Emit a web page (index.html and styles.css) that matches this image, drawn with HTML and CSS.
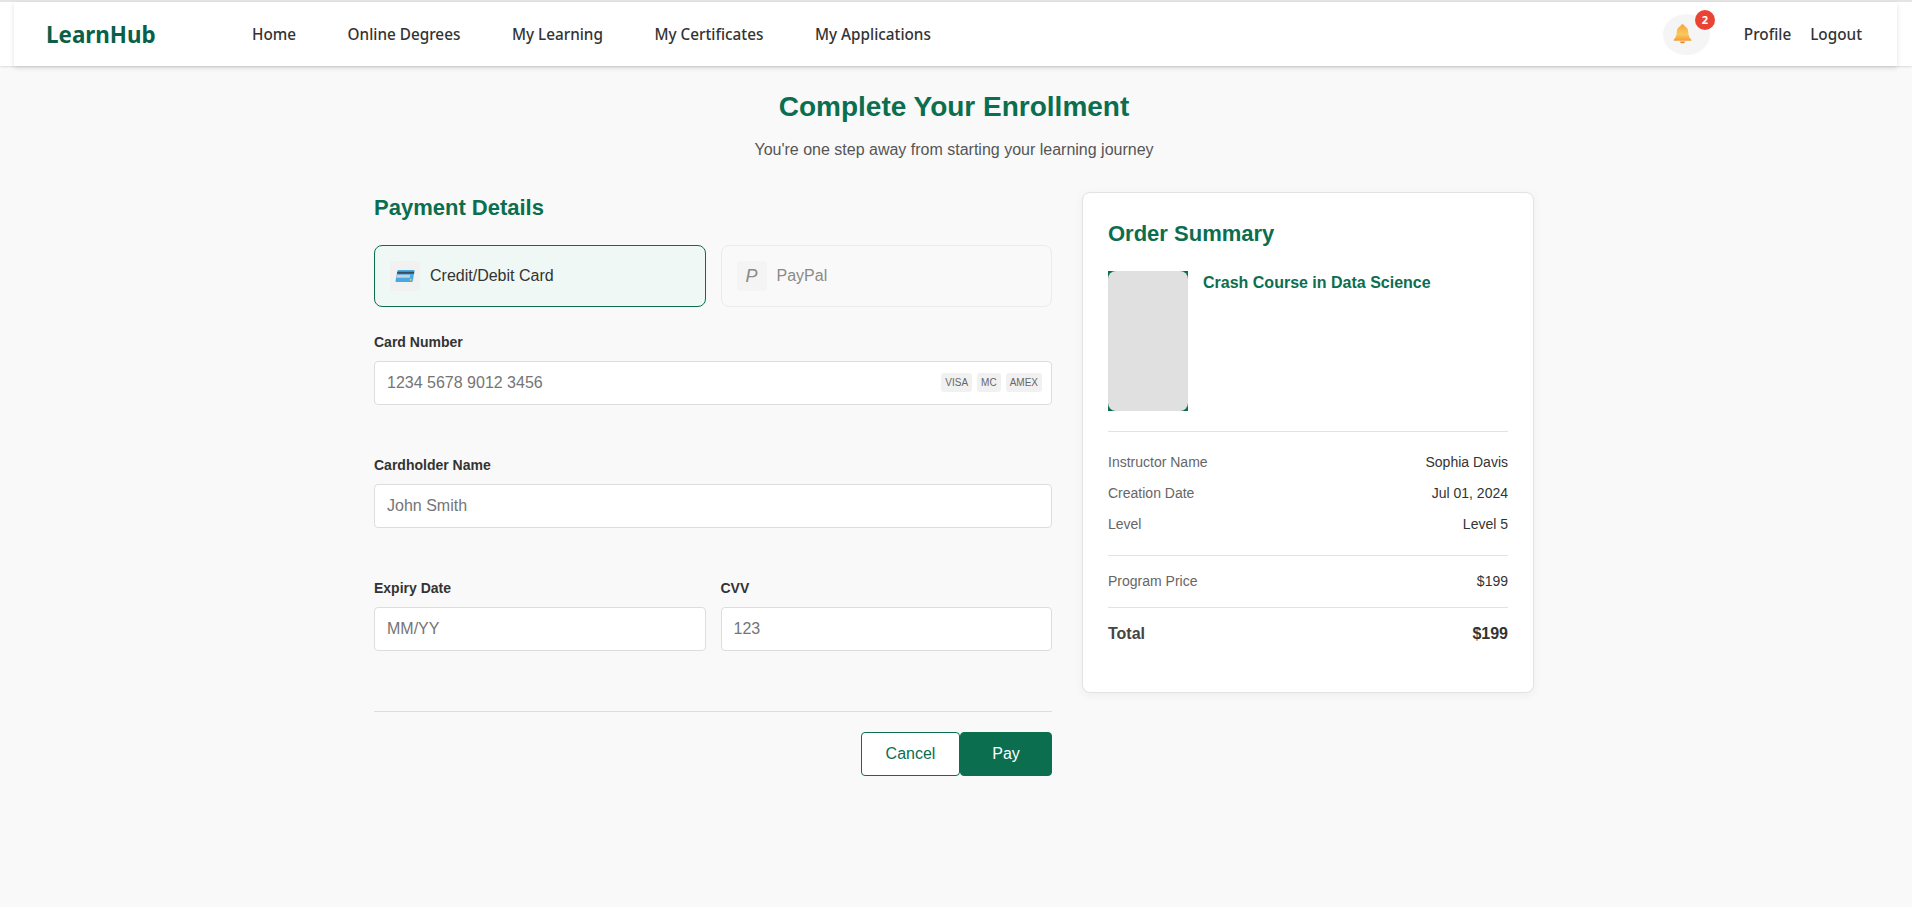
FILE: index.html
```html
<!DOCTYPE html>
<html lang="en">
<head>
<meta charset="utf-8">
<title>LearnHub - Complete Your Enrollment</title>
<link rel="stylesheet" href="styles.css">
</head>
<body>
<header class="topbar">
  <nav class="nav">
    <a class="logo" href="#">LearnHub</a>
    <ul class="nav-links">
      <li><a href="#">Home</a></li>
      <li><a href="#">Online Degrees</a></li>
      <li><a href="#">My Learning</a></li>
      <li><a href="#">My Certificates</a></li>
      <li><a href="#">My Applications</a></li>
    </ul>
    <div class="nav-right">
      <div class="bell">
        <svg class="bell-icon" width="23" height="22" viewBox="0 0 20 20" aria-hidden="true">
          <defs>
            <linearGradient id="bellGrad" x1="0" y1="0" x2="0" y2="1">
              <stop offset="0" stop-color="#f5a63c"/>
              <stop offset="0.6" stop-color="#fbc95c"/>
              <stop offset="1" stop-color="#f49b36"/>
            </linearGradient>
          </defs>
          <path d="M10 1.2c-1 0-1.6.7-1.7 1.5C6 3.5 5 5.400 4.800 8c-.2 3-.7 5-2.800 7.300-.3.3-.2.9.3.9h15.400c.5 0 .6-.6.3-.9C15.900 13 15.400 11 15.200 8 15 5.400 14 3.500 11.700 2.700 11.600 1.900 11 1.200 10 1.200z" fill="url(#bellGrad)"/>
          <path d="M7.600 16.800h4.800c-.3 1.100-1.200 1.700-2.400 1.700s-2.100-.6-2.400-1.700z" fill="#e8862a"/>
        </svg>
        <span class="badge">2</span>
      </div>
      <a href="#">Profile</a>
      <a href="#">Logout</a>
    </div>
  </nav>
</header>

<main class="page">
  <h1 class="title">Complete Your Enrollment</h1>
  <p class="subtitle">You're one step away from starting your learning journey</p>

  <div class="columns">
    <section class="payment">
      <h2 class="section-title">Payment Details</h2>
      <div class="methods">
        <div class="method active">
          <span class="method-icon">
            <svg width="20" height="14" viewBox="0 0 20 14" aria-hidden="true">
              <path d="M3.500 1h15.300c.5 0 .8.400.7.800l-1.700 10.300c-.1.500-.5.900-1 .9H1.200c-.5 0-.8-.4-.7-.9L2.400 1.900c.1-.5.600-.9 1.100-.9z" fill="#4aa8e0"/>
              <path d="M2.300 2.800h17l-.3 2H2z" fill="#3b4a5a"/>
              <path d="M1.900 5.800h13.300l-.4 3H1.400z" fill="#c4d2dc"/>
              <circle cx="15.800" cy="10.700" r="1" fill="#f2c744"/>
            </svg>
          </span>
          <span>Credit/Debit Card</span>
        </div>
        <div class="method disabled">
          <span class="method-icon paypal">P</span>
          <span>PayPal</span>
        </div>
      </div>

      <div class="field">
        <label class="label" for="card">Card Number</label>
        <div class="input-wrap">
          <input class="input" id="card" placeholder="1234 5678 9012 3456">
          <div class="card-brands">
            <span>VISA</span><span>MC</span><span>AMEX</span>
          </div>
        </div>
      </div>

      <div class="field">
        <label class="label" for="holder">Cardholder Name</label>
        <input class="input" id="holder" placeholder="John Smith">
      </div>

      <div class="field-row">
        <div class="field">
          <label class="label" for="expiry">Expiry Date</label>
          <input class="input" id="expiry" placeholder="MM/YY">
        </div>
        <div class="field">
          <label class="label" for="cvv">CVV</label>
          <input class="input" id="cvv" placeholder="123">
        </div>
      </div>

      <div class="actions">
        <button class="btn btn-cancel" type="button">Cancel</button>
        <button class="btn btn-pay" type="button">Pay</button>
      </div>
    </section>

    <aside class="summary">
      <h2 class="summary-title">Order Summary</h2>
      <div class="course">
        <div class="thumb"><div class="thumb-inner"></div></div>
        <h3 class="course-name">Crash Course in Data Science</h3>
      </div>
      <div class="details">
        <div class="row"><span class="key">Instructor Name</span><span class="val">Sophia Davis</span></div>
        <div class="row"><span class="key">Creation Date</span><span class="val">Jul 01, 2024</span></div>
        <div class="row"><span class="key">Level</span><span class="val">Level 5</span></div>
      </div>
      <div class="price">
        <div class="row"><span class="key">Program Price</span><span class="val">$199</span></div>
      </div>
      <div class="total"><span class="total-label">Total</span><span>$199</span></div>
    </aside>
  </div>
</main>
</body>
</html>
```

FILE: styles.css
```css
* { box-sizing: border-box; }

html, body { margin: 0; padding: 0; }

body {
  min-height: 907px;
  background: #f9f9f9;
  font-family: "Liberation Sans", Arial, sans-serif;
  color: #333;
}

a { text-decoration: none; color: inherit; }

.topbar {
  height: 66px;
  border-top: 2px solid #e4e4e4;
  background: #fff;
  padding: 0 15px 0 14px;
  box-shadow: 0 1px 2px rgba(0,0,0,.12);
}

.nav {
  height: 64px;
  display: flex;
  align-items: center;
  padding: 0 35px 0 32px;
  box-shadow: 0 2px 5px rgba(0,0,0,.12);
  font-family: "Noto Sans", "Open Sans", sans-serif;
  font-size: 15.3px;
  font-weight: 500;
  color: #333;
}

.logo {
  width: 206px;
  font-size: 22.4px;
  font-weight: 700;
  color: #0a5f48;
}

.nav-links {
  display: flex;
  gap: 51.5px;
  list-style: none;
  margin: 0;
  padding: 0;
}

.nav-right {
  margin-left: auto;
  display: flex;
  align-items: center;
  gap: 19px;
}

.bell {
  position: relative;
  width: 47px;
  height: 41px;
  margin-right: 15px;
  padding-right: 7px;
  border-radius: 50%;
  background: #f5f5f5;
  display: flex;
  align-items: center;
  justify-content: center;
}

.badge {
  position: absolute;
  top: -4px;
  right: -5px;
  width: 20px;
  height: 20px;
  border-radius: 50%;
  background: #ea4335;
  color: #fff;
  font-size: 11px;
  font-weight: 700;
  display: flex;
  align-items: center;
  justify-content: center;
}

.page {
  width: 1160px;
  margin-left: 374px;
  padding-top: 25px;
}

.title {
  margin: 0;
  text-align: center;
  font-size: 28px;
  line-height: 32px;
  font-weight: 700;
  color: #0b6e4f;
}

.subtitle {
  margin: 18px 0 0;
  text-align: center;
  font-size: 16px;
  line-height: 18px;
  color: #555;
}

.columns {
  display: flex;
  gap: 30px;
  align-items: flex-start;
  margin-top: 33px;
}

.payment {
  width: 678px;
  padding-top: 3px;
}

.section-title {
  margin: 0;
  font-size: 22px;
  line-height: 26px;
  font-weight: 700;
  color: #0b6e4f;
}

.methods {
  display: grid;
  grid-template-columns: 1fr 1fr;
  gap: 15px;
  margin-top: 24px;
}

.method {
  height: 62px;
  display: flex;
  align-items: center;
  gap: 10px;
  padding: 0 15px;
  border: 1px solid #e5e5e5;
  border-radius: 8px;
  font-size: 16px;
}

.method.active {
  background: #eff8f4;
  border-color: #0b6e4f;
}

.method.disabled {
  color: #8a8a8a;
  border-color: #ebebeb;
}

.method-icon {
  width: 30px;
  height: 30px;
  border-radius: 4px;
  background: #f1f1f1;
  display: flex;
  align-items: center;
  justify-content: center;
}

.paypal {
  background: #f4f4f4;
  font-size: 18px;
  font-style: italic;
}

.field {
  margin-bottom: 52px;
  flex: 1;
}

.methods + .field { margin-top: 27px; }

.label {
  display: block;
  margin-bottom: 11px;
  font-size: 14px;
  line-height: 16px;
  font-weight: 700;
  color: #333;
}

.input-wrap { position: relative; }

.input {
  display: block;
  width: 100%;
  height: 44px;
  padding: 0 12px;
  border: 1px solid #ddd;
  border-radius: 4px;
  background: #fff;
  font-family: inherit;
  font-size: 16px;
  color: #333;
}

.input::placeholder { color: #757575; opacity: 1; }

.card-brands {
  position: absolute;
  top: 12px;
  right: 10px;
  display: flex;
  gap: 5px;
}

.card-brands span {
  height: 19px;
  padding: 0 4px;
  border-radius: 3px;
  background: #f1f1f1;
  font-size: 10px;
  line-height: 19px;
  color: #666;
}

.field-row {
  display: flex;
  gap: 15px;
}

.actions {
  display: flex;
  justify-content: flex-end;
  margin-top: 8px;
  padding-top: 20px;
  border-top: 1px solid #ddd;
}

.btn {
  height: 44px;
  border-radius: 4px;
  font-family: inherit;
  font-size: 16px;
  border: 1px solid #0b6e4f;
}

.btn-cancel {
  width: 99px;
  background: #fff;
  color: #0b6e4f;
}

.btn-pay {
  width: 92px;
  background: #0b6e4f;
  color: #fff;
}

.summary {
  width: 452px;
  height: 501px;
  padding: 28px 25px 25px;
  background: #fff;
  border: 1px solid #e2e2e2;
  border-radius: 8px;
  box-shadow: 0 2px 10px rgba(0,0,0,.05);
}

.summary-title {
  margin: 0;
  font-size: 22px;
  line-height: 26px;
  font-weight: 700;
  color: #0b6e4f;
}

.course {
  display: flex;
  gap: 15px;
  margin-top: 24px;
  padding-bottom: 20px;
  border-bottom: 1px solid #e2e2e2;
}

.thumb {
  width: 80px;
  height: 140px;
  background: #0b6e4f;
}

.thumb-inner {
  height: 100%;
  border-radius: 8px;
  background: #e0e0e0;
}

.course-name {
  margin: 3px 0 0;
  font-size: 16px;
  line-height: 18px;
  font-weight: 700;
  color: #0b6e4f;
}

.details {
  padding: 14px 0 16px;
  border-bottom: 1px solid #e2e2e2;
}

.details .row { height: 31px; }

.row {
  display: flex;
  justify-content: space-between;
  align-items: center;
  font-size: 14px;
}

.key { color: #666; }
.val { color: #333; }

.price {
  padding: 15px 0 16px;
  border-bottom: 1px solid #e2e2e2;
}

.price .row { height: 20px; }

.total {
  display: flex;
  justify-content: space-between;
  padding-top: 17px;
  font-size: 16px;
  line-height: 18px;
  font-weight: 700;
}

.total-label { color: #444; }
```
